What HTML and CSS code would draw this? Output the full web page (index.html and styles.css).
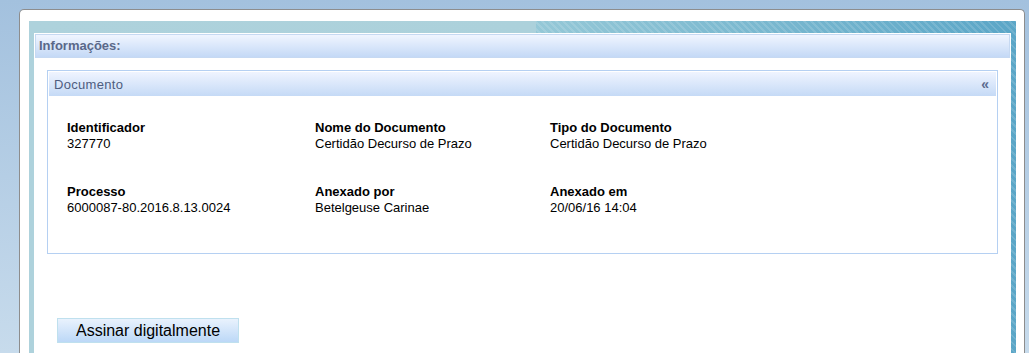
FILE: index.html
```html
<!DOCTYPE html>
<html lang="pt">
<head>
<meta charset="utf-8">
<title>Informações</title>
<link rel="stylesheet" href="styles.css">
</head>
<body>
<div class="window">
  <div class="frame">
    <div class="content">
      <div class="info-header">Informações:</div>
      <div class="info-body">
        <div class="doc-panel">
          <div class="doc-header">
            <span class="doc-title">Documento</span>
            <span class="collapse">«</span>
          </div>
          <div class="doc-body">
            <div class="field">
              <div class="label">Identificador</div>
              <div class="value">327770</div>
            </div>
            <div class="field">
              <div class="label">Nome do Documento</div>
              <div class="value">Certidão Decurso de Prazo</div>
            </div>
            <div class="field">
              <div class="label">Tipo do Documento</div>
              <div class="value">Certidão Decurso de Prazo</div>
            </div>
            <div class="field">
              <div class="label">Processo</div>
              <div class="value">6000087-80.2016.8.13.0024</div>
            </div>
            <div class="field">
              <div class="label">Anexado por</div>
              <div class="value">Betelgeuse Carinae</div>
            </div>
            <div class="field">
              <div class="label">Anexado em</div>
              <div class="value">20/06/16 14:04</div>
            </div>
          </div>
        </div>
      </div>
      <div class="actions">
        <button class="btn" type="button">Assinar digitalmente</button>
      </div>
    </div>
  </div>
</div>
</body>
</html>
```

FILE: styles.css
```css
html, body {
  margin: 0;
  padding: 0;
  height: 353px;
  overflow: hidden;
}

body {
  background: linear-gradient(#a3c1de, #c7dbec);
  font-family: "Liberation Sans", Arial, sans-serif;
  font-size: 13px;
  color: #000;
}

.window {
  box-sizing: border-box;
  margin: 9px 4px 0 19px;
  border: 1px solid #8d8d8d;
  border-bottom: none;
  border-radius: 5px 5px 0 0;
  background: #fff;
  padding: 11px 8px 0 9px;
  height: 344px;
}

.frame {
  box-sizing: border-box;
  padding: 12px 5px 0 5px;
  height: 100%;
  background:
    repeating-linear-gradient(45deg, rgba(255,255,255,0) 0 3px, rgba(255,255,255,0.13) 3px 5px) 507px 0 / calc(100% - 507px) 100% no-repeat,
    linear-gradient(to right, #aed2dc 0, #acd1db 507px, #95c8d7 507px, #5ba6c7 100%);
}

.content {
  box-sizing: border-box;
  background: #fff;
  height: 100%;
  padding-top: 1px;
}

.info-header {
  margin: 0 1px;
  height: 22px;
  line-height: 22px;
  border: 1px solid #c6d9f2;
  padding-left: 3px;
  background: linear-gradient(#f0f5ff, #c4d9f6);
  color: #5a6889;
  font-weight: bold;
}

.info-body {
  padding: 12px 13px 0 13px;
}

.doc-panel {
  border: 1px solid #b5d0f2;
  padding: 1px;
}

.doc-header {
  height: 24px;
  display: flex;
  align-items: center;
  justify-content: space-between;
  padding: 0 7px 0 5px;
  background: linear-gradient(#eff4ff, #c5daf6);
  color: #4e5d7f;
}

.doc-title {
  letter-spacing: 0.3px;
}

.collapse {
  font-weight: bold;
  font-size: 14px;
  color: #5b6b8e;
}

.doc-body {
  display: grid;
  grid-template-columns: 248px 235px 1fr;
  row-gap: 32px;
  padding: 24px 0 36px 18px;
}

.label {
  font-weight: bold;
  line-height: 16px;
}

.value {
  line-height: 16px;
}

.actions {
  padding: 64px 0 0 23px;
}

.btn {
  display: block;
  width: 182px;
  height: 25px;
  margin: 0;
  padding: 0;
  border: 1px solid #bfe0ee;
  border-radius: 0;
  background: linear-gradient(#e9f2fd, #bcd8f7);
  font-family: "Liberation Sans", Arial, sans-serif;
  font-size: 16px;
  color: #000;
}
```
